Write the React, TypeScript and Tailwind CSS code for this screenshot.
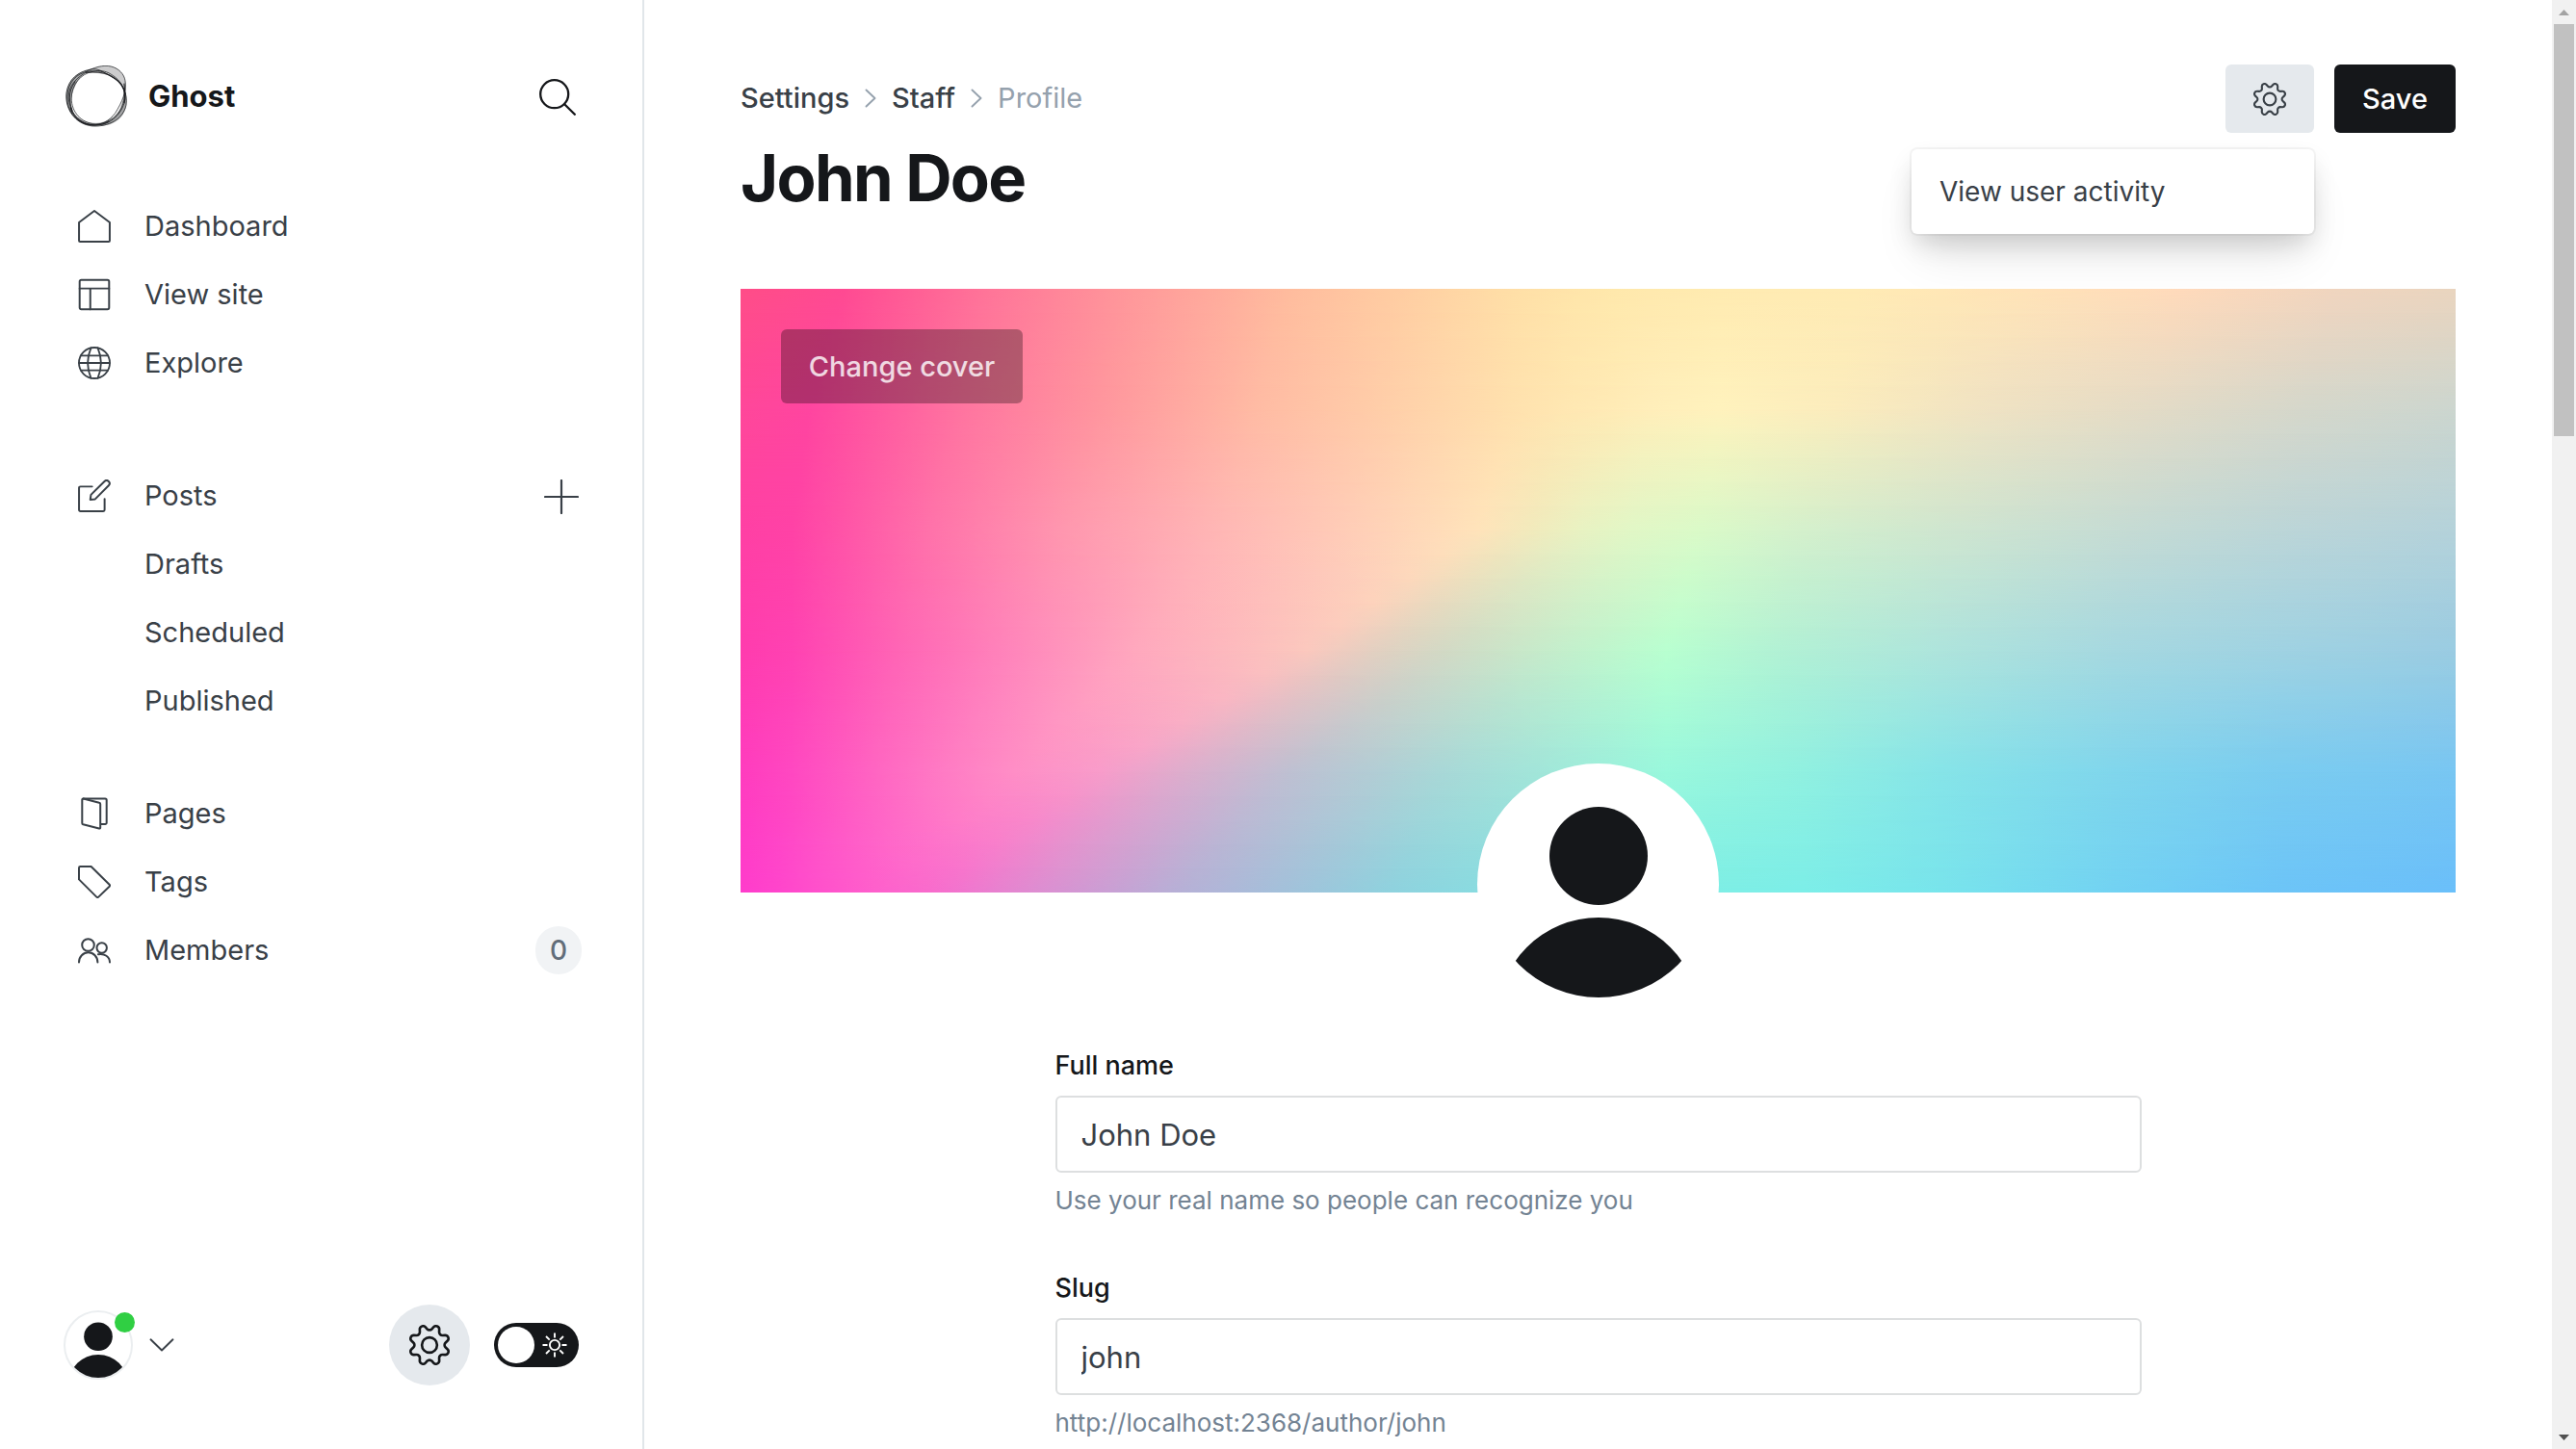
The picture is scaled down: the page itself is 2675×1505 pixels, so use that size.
import React from "react";

type IconProps = { className?: string };

const stroke = {
  fill: "none",
  stroke: "currentColor",
  strokeLinecap: "round" as const,
  strokeLinejoin: "round" as const,
};

function GearIcon({ className }: IconProps) {
  return (
    <svg viewBox="0 0 24 24" className={className} {...stroke} strokeWidth="1.5" aria-hidden="true">
      <path d="M10.546 2.438a1.957 1.957 0 0 0 2.908 0L14.4 1.4a1.959 1.959 0 0 1 3.41 1.413l-.071 1.4A1.958 1.958 0 0 0 19.79 6.27l1.4-.071A1.959 1.959 0 0 1 22.6 9.606l-1.042.94a1.96 1.96 0 0 0 0 2.909l1.042.94a1.959 1.959 0 0 1-1.413 3.41l-1.4-.071a1.958 1.958 0 0 0-2.056 2.056l.071 1.4A1.959 1.959 0 0 1 14.4 22.6l-.941-1.041a1.959 1.959 0 0 0-2.908 0L9.606 22.6A1.959 1.959 0 0 1 6.2 21.192l.072-1.4a1.958 1.958 0 0 0-2.056-2.056l-1.4.071A1.958 1.958 0 0 1 1.4 14.4l1.041-.94a1.96 1.96 0 0 0 0-2.909L1.4 9.606A1.958 1.958 0 0 1 2.813 6.2l1.4.071a1.958 1.958 0 0 0 2.058-2.06L6.2 2.81A1.959 1.959 0 0 1 9.606 1.4z" />
      <circle cx="12" cy="12" r="4.5" />
    </svg>
  );
}

function HomeIcon({ className }: IconProps) {
  return (
    <svg viewBox="0 0 24 24" className={className} {...stroke} strokeWidth="1.4" aria-hidden="true">
      <path d="M12 .75.75 9.2v13.3c0 .4.35.75.75.75h21c.4 0 .75-.35.75-.75V9.2z" />
    </svg>
  );
}

function LayoutIcon({ className }: IconProps) {
  return (
    <svg viewBox="0 0 24 24" className={className} {...stroke} strokeWidth="1.4" aria-hidden="true">
      <rect x="1.2" y="1.2" width="21.6" height="21.6" rx="1.2" />
      <path d="M1.2 7.5h21.6M9 7.5v15.3" />
    </svg>
  );
}

function GlobeIcon({ className }: IconProps) {
  return (
    <svg viewBox="0 0 24 24" className={className} {...stroke} strokeWidth="1.3" aria-hidden="true">
      <circle cx="12" cy="12" r="11.3" />
      <path d="M2.2 6.6h19.6M.8 12h22.4M2.2 17.4h19.6M9.5 1C6.5 8 6.5 16 9.5 23M14.5 1c3 7 3 15 0 22" />
    </svg>
  );
}

function WriteIcon({ className }: IconProps) {
  return (
    <svg viewBox="0 0 24 24" className={className} {...stroke} strokeWidth="1.4" aria-hidden="true">
      <path d="m12.6 14.4-3.6.4.5-3.6 9.9-9.8a2.1 2.1 0 0 1 3.1 3z" />
      <path d="M19.5 14.2v8.1a1 1 0 0 1-1 1H1.75a1 1 0 0 1-1-1V6.200a1 1 0 0 1 1-1h8.6" />
    </svg>
  );
}

function PagesIcon({ className }: IconProps) {
  return (
    <svg viewBox="0 0 34 34" className={className} {...stroke} strokeWidth="2" aria-hidden="true">
      <path d="M5.5 1.5h22.7a1.5 1.5 0 0 1 1.5 1.5v23.5a1.5 1.5 0 0 1-1.5 1.5H24" />
      <path d="M5.5 1.5 22 5.7a1.5 1.5 0 0 1 1.2 1.5v24.300a1 1 0 0 1-1.300 1L5.300 28.300a1.500 1.500 0 0 1-1-1.400V2.500a1 1 0 0 1 1.200-1z" />
    </svg>
  );
}

function TagIcon({ className }: IconProps) {
  return (
    <svg viewBox="0 0 34 34" className={className} {...stroke} strokeWidth="2" aria-hidden="true">
      <path d="M2.4 1h11.2L32.6 19.8a1.4 1.4 0 0 1 0 1.900L21.300 32.600a1.400 1.400 0 0 1-2 0L1 14.400v-12A1.400 1.400 0 0 1 2.400 1z" />
    </svg>
  );
}

function MembersIcon({ className }: IconProps) {
  return (
    <svg viewBox="0 0 34 34" className={className} {...stroke} strokeWidth="2" aria-hidden="true">
      <circle cx="10.500" cy="11.500" r="6.300" />
      <circle cx="24.700" cy="14.500" r="5.200" />
      <path d="M1 29.500a9.700 10.200 0 0 1 19.400 0M21 21.200c6.500-1.200 12 2.600 12 8.300" />
    </svg>
  );
}

function SearchIcon({ className }: IconProps) {
  return (
    <svg viewBox="0 0 38 38" className={className} {...stroke} strokeWidth="2.3" aria-hidden="true">
      <circle cx="15.7" cy="15.7" r="14.5" />
      <path d="M26.2 26.2 36.8 36.8" />
    </svg>
  );
}

function PlusIcon({ className }: IconProps) {
  return (
    <svg viewBox="0 0 36 36" className={className} {...stroke} strokeWidth="2.2" aria-hidden="true">
      <path d="M18 1v34M1 18h34" />
    </svg>
  );
}

function ChevronRight({ className }: IconProps) {
  return (
    <svg viewBox="0 0 12 20" className={className} {...stroke} strokeWidth="1.9" aria-hidden="true">
      <path d="m1.5 1.500 9 8.500-9 8.500" />
    </svg>
  );
}

function ChevronDown({ className }: IconProps) {
  return (
    <svg viewBox="0 0 26 14" className={className} {...stroke} strokeWidth="1.9" aria-hidden="true">
      <path d="m1.5 1.300 11.500 11.200L24.500 1.300" />
    </svg>
  );
}

function SunIcon({ className }: IconProps) {
  return (
    <svg viewBox="0 0 26 26" className={className} {...stroke} strokeWidth="1.9" strokeLinecap="butt" aria-hidden="true">
      <circle cx="13" cy="13" r="5.100" />
      <path d="M13 .5v5M13 20.500v5M.5 13h5M20.500 13h5M4 4l3.700 3.700M18.300 18.300 22 22M22 4l-3.700 3.700M7.700 18.300 4 22" />
    </svg>
  );
}

function GhostLogo({ className }: IconProps) {
  return (
    <svg viewBox="0 0 62 62" className={className} fill="none" stroke="#15171a" aria-hidden="true">
      <g stroke="none" fill="#15171a">
        <path fillOpacity="0.22" d="M19 7C28 2 38-1 46 1c8 2 13 8 14 14 1 4 1 8 0 12C57 18 52 12 44 10 36 8 28 7 19 7z" />
        <path fillOpacity="0.4" d="M25 4C13 6 5 12 2 22c-3 11-1 20 5 28C5 40 5 30 10 20 13 13 18 8 25 4z" />
        <path fillOpacity="0.38" d="M59 22c3 9 4 19-1 27-5 8-14 12-24 12 9-3 17-10 21-18 3-7 4-14 4-21z" />
        <path fillOpacity="0.3" d="M4 42c6 11 15 16 27 16 8 0 14-4 18-8-4 7-12 11-22 11C15 60 7 53 4 42z" />
      </g>
      <g strokeWidth="0.9" strokeOpacity="0.75">
        <path d="M19 7C28 2 38-1 46 1c8 2 13 8 14 14 2 10-3 22-10 33C44 56 36 60 27 60 13 59 4 49 2 37 0 22 8 10 19 7z" />
        <path d="M25 4C13 6 3 14 1 27c-2 16 8 32 26 34 16 1 31-7 34-21 2-12-4-23-15-29C38 7 33 2 25 4z" />
        <path d="M28 6C15 8 6 20 6 33c0 14 10 25 24 26 14 0 25-9 28-21 4-13-2-23-12-29-6-4-12-4-18-3z" />
        <path d="M23 6C12 11 3 20 3 32c1 15 11 27 26 28 14 1 26-9 30-22 3-12-2-21-11-26C40 7 31 3 23 6z" />
      </g>
      <g strokeWidth="1.3" strokeOpacity="0.8">
        <path d="M20 7c11-1 21 0 28 5 7 4 11 10 12 17" />
        <path d="M5 42c3 11 12 18 24 18 6 0 11-1 15-4" />
        <path d="M59 18c1 7 2 14 0 20" />
        <path d="M7 46C3 36 3 25 10 16" strokeWidth="1" />
      </g>
    </svg>
  );
}

function Person({ className }: IconProps) {
  const id = React.useId();
  return (
    <svg viewBox="0 0 234 234" className={className} aria-hidden="true">
      <clipPath id={id}>
        <circle cx="117" cy="117" r="117" />
      </clipPath>
      <g clipPath={`url(#${id})`} fill="#15171a">
        <circle cx="117" cy="87" r="51" />
        <circle cx="117" cy="256.500" r="105.500" />
      </g>
    </svg>
  );
}

type Stop = [number, string];

/* Key rows of the cover artwork; the n-th stop of each row follows the same contour. */
const coverRows: Stop[][] = [
  [[0, "#ff4d88"], [6, "#ff4a92"], [14, "#ff7398"], [22, "#ff959a"], [32, "#ffbc9e"], [45, "#ffdfa7"], [48, "#ffe4a9"], [51, "#ffe8ac"], [53, "#ffe9ae"], [57, "#ffebb1"], [65, "#ffebb4"], [75, "#ffe3b8"], [84, "#ffdabb"], [93, "#f0d5bf"], [100, "#ead5bf"]],
  [[0, "#ff479a"], [4, "#ff45a0"], [13, "#ff75a0"], [21, "#ff969e"], [30, "#ffbba4"], [45, "#ffe1ae"], [48, "#ffe7b2"], [51, "#ffebb6"], [53, "#ffeeba"], [57, "#fff2bd"], [64, "#fbecbd"], [73, "#efe2c3"], [82, "#e3dbc6"], [91, "#d5d7cb"], [100, "#ccd6cf"]],
  [[0, "#ff40a4"], [3, "#ff42a6"], [11, "#ff72aa"], [19, "#ff98af"], [28, "#ffb7b5"], [43, "#ffe3ba"], [46, "#f2eabc"], [49, "#e8f2c2"], [52, "#e1f7c6"], [56, "#dafac8"], [62, "#d4f0cc"], [71, "#cee5d0"], [81, "#c5dbd4"], [91, "#bbd5d8"], [100, "#b4d2da"]],
  [[0, "#ff3cae"], [3, "#ff42b2"], [9, "#ff64b5"], [16, "#ff86bb"], [23, "#ffa8be"], [33, "#fbc8be"], [37, "#e2d0c1"], [41, "#d2d9c5"], [47, "#c5eccb"], [54, "#b8ffd0"], [60, "#b2f2d4"], [70, "#aee4dc"], [80, "#a6d8e0"], [90, "#9fd2e2"], [100, "#9acce2"]],
  [[0, "#ff3cbe"], [3, "#ff48c1"], [8, "#ff66c2"], [12, "#ff7cc4"], [16, "#ff8ec6"], [21, "#f89cca"], [26, "#dcaecd"], [32, "#bec0d2"], [41, "#a8d8d7"], [54, "#99f8dc"], [62, "#90f0e0"], [70, "#86e4e8"], [80, "#80d6ec"], [90, "#7accf0"], [100, "#78c6f2"]],
  [[0, "#ff3ccc"], [2, "#ff44cc"], [4, "#ff4ecc"], [6, "#ff57cc"], [8, "#fe60cc"], [11, "#f86bcc"], [17, "#de8cd1"], [25, "#b8aed6"], [38, "#8ed2de"], [54, "#7eeee4"], [62, "#7ceee8"], [70, "#78e4ec"], [80, "#72d2f2"], [90, "#6cc4f7"], [100, "#6abffa"]],
];

function mixColor(a: string, b: string, t: number) {
  const channel = (hex: string, i: number) => parseInt(hex.slice(1 + i * 2, 3 + i * 2), 16);
  const parts = [0, 1, 2].map((i) => Math.round(channel(a, i) * (1 - t) + channel(b, i) * t));
  return `rgb(${parts.join(",")})`;
}

const STEPS = 5;
const bands = (coverRows.length - 1) * STEPS;
const meshRows: Stop[][] = Array.from({ length: bands + 1 }, (_, n) => {
  const k = Math.min(Math.floor(n / STEPS), coverRows.length - 2);
  const t = n / STEPS - k;
  return coverRows[k].map(([at, color], i): Stop => {
    const [nextAt, nextColor] = coverRows[k + 1][i];
    return [at * (1 - t) + nextAt * t, mixColor(color, nextColor, t)];
  });
});

/* Colour mesh: each row is a horizontal gradient, faded into the next one. */
function CoverArt({ className }: IconProps) {
  return (
    <svg viewBox={`0 0 100 ${bands}`} preserveAspectRatio="none" className={className} aria-hidden="true">
      <defs>
        {meshRows.map((row, i) => (
          <linearGradient key={i} id={`cover-row-${i}`} gradientUnits="userSpaceOnUse" x1="0" x2="100" y1="0" y2="0">
            {row.map(([at, color], n) => (
              <stop key={n} offset={`${at}%`} stopColor={color} />
            ))}
          </linearGradient>
        ))}
        {meshRows.slice(1).map((_, i) => (
          <React.Fragment key={i}>
            <linearGradient id={`cover-fade-${i}`} gradientUnits="userSpaceOnUse" x1="0" x2="0" y1={i} y2={i + 1}>
              <stop offset="0" stopColor="#fff" stopOpacity="0" />
              <stop offset="1" stopColor="#fff" />
            </linearGradient>
            <mask id={`cover-mask-${i}`} maskUnits="userSpaceOnUse" x="0" y="0" width="100" height={bands}>
              <rect width="100" height={bands} fill={`url(#cover-fade-${i})`} />
            </mask>
          </React.Fragment>
        ))}
      </defs>
      <rect width="100" height={bands} fill="url(#cover-row-0)" />
      {meshRows.slice(1).map((_, i) => (
        <rect key={i} width="100" height={bands} fill={`url(#cover-row-${i + 1})`} mask={`url(#cover-mask-${i})`} />
      ))}
    </svg>
  );
}

function NavItem({ label, icon, children }: { label: string; icon?: React.ReactNode; children?: React.ReactNode }) {
  return (
    <li className="flex h-[71px] items-center justify-between">
      <a href="#" className="flex items-center">
        <span className="flex w-[69px] shrink-0 pt-px">{icon}</span>
        {label}
      </a>
      {children}
    </li>
  );
}

function Sidebar() {
  const icon = "size-[34px]";
  return (
    <aside className="flex w-[669px] shrink-0 flex-col justify-between border-r-2 border-[#e1e6ea] px-[66px] pt-[67px] pb-[66px]">
      <div>
        <div className="flex items-center justify-between pl-0.5">
          <div className="flex items-center gap-[22px] text-[31px] leading-[66px] font-bold text-[#15171a]">
            <GhostLogo className="size-[64px]" />
            Ghost
          </div>
          <button type="button" aria-label="Search" className="mr-[3px] pt-px text-[#15171a]">
            <SearchIcon className="size-[38px]" />
          </button>
        </div>
        <nav className="mt-[66px] pl-[15px] text-[29px] text-[#394047]">
          <ul>
            <NavItem label="Dashboard" icon={<HomeIcon className={icon} />} />
            <NavItem label="View site" icon={<LayoutIcon className={icon} />} />
            <NavItem label="Explore" icon={<GlobeIcon className={icon} />} />
          </ul>
          <ul className="mt-[67px]">
            <NavItem label="Posts" icon={<WriteIcon className={icon} />}>
              <button type="button" aria-label="New post" className="pt-0.5">
                <PlusIcon className="size-9" />
              </button>
            </NavItem>
            <NavItem label="Drafts" />
            <NavItem label="Scheduled" />
            <NavItem label="Published" />
          </ul>
          <ul className="mt-[46px]">
            <NavItem label="Pages" icon={<PagesIcon className={icon} />} />
            <NavItem label="Tags" icon={<TagIcon className={icon} />} />
            <NavItem label="Members" icon={<MembersIcon className={icon} />}>
              <span className="-mr-[3px] flex h-[50px] w-[48px] items-center justify-center rounded-full bg-[#f1f3f5] text-[28px] font-medium text-[#626d79]">
                0
              </span>
            </NavItem>
          </ul>
        </nav>
      </div>
      <div className="flex items-center justify-between">
        <button type="button" aria-label="Account" className="flex items-center gap-[17px] text-[#394047]">
          <span className="relative block size-[72px] rounded-full border-2 border-[#ebeef0]">
            <Person className="size-full" />
            <span className="absolute top-0 -right-1 size-[21px] rounded-full bg-[#30cf43]" />
          </span>
          <ChevronDown className="h-[14px] w-[26px]" />
        </button>
        <div className="flex items-center gap-[25px]">
          <button
            type="button"
            aria-label="Settings"
            className="flex size-[84px] items-center justify-center rounded-full bg-[#e5e9ed] text-[#15171a]"
          >
            <GearIcon className="size-[42px]" />
          </button>
          <label className="relative flex h-[46px] w-[88px] items-center justify-between rounded-full bg-[#15171a] pr-3 pl-1 text-white">
            <input type="checkbox" role="switch" aria-label="Dark mode" className="absolute inset-0 size-full opacity-0" />
            <span className="size-[38px] rounded-full bg-white" />
            <SunIcon className="size-[26px]" />
          </label>
        </div>
      </div>
    </aside>
  );
}

function Field({ id, label, value, hint }: { id: string; label: string; value: string; hint: string }) {
  return (
    <div className="flex flex-col">
      <label htmlFor={id} className="text-[27px] leading-[40px] font-medium text-[#15171a]">
        {label}
      </label>
      <input
        id={id}
        type="text"
        defaultValue={value}
        aria-describedby={`${id}-hint`}
        className="mt-[11px] h-[80px] w-full rounded-md border-2 border-[#dddfe0] bg-white px-[25px] text-[31px] text-[#394047]"
      />
      <p id={`${id}-hint`} className="mt-[9px] text-[26px] leading-[40px] text-[#738393]">
        {hint}
      </p>
    </div>
  );
}

function ScrollRail() {
  return (
    <div aria-hidden="true" className="flex w-[25px] shrink-0 flex-col items-center bg-[#f1f1f1]">
      <svg viewBox="0 0 25 25" className="size-[25px]">
        <path d="M7 16l5.500-6 5.500 6z" fill="#a3a3a3" />
      </svg>
      <div className="h-[428px] w-[21px] bg-[#c1c1c1]" />
      <svg viewBox="0 0 25 25" className="mt-auto size-[25px]">
        <path d="M7 10l5.500 6 5.500-6z" fill="#505050" />
      </svg>
    </div>
  );
}

export default function App() {
  return (
    <div className="flex h-screen overflow-hidden bg-white font-['Inter',sans-serif]">
      <Sidebar />
      <main className="min-w-0 flex-1 overflow-hidden px-[100px] pt-[67px]">
        <header className="flex items-start justify-between">
          <div>
            <nav aria-label="Breadcrumb" className="flex h-[70px] items-center gap-4 text-[29px] font-medium text-[#394047]">
              <a href="#">Settings</a>
              <ChevronRight className="h-5 w-3 text-[#95a1ad]" />
              <a href="#">Staff</a>
              <ChevronRight className="h-5 w-3 text-[#95a1ad]" />
              <span className="font-normal text-[#95a1ad]">Profile</span>
            </nav>
            <h1 className="mt-2 text-[67px] leading-[80px] font-bold tracking-tight text-[#15171a]">John Doe</h1>
          </div>
          <div className="relative flex gap-[21px]">
            <button
              type="button"
              aria-label="Actions"
              className="flex h-[71px] w-[92px] items-center justify-center rounded-md bg-[#e5e9ed] text-[#394047]"
            >
              <GearIcon className="size-[34px]" />
            </button>
            <button type="button" className="h-[71px] w-[126px] rounded-md bg-[#15171a] text-[29px] font-medium text-white">
              Save
            </button>
            <div className="absolute top-[88px] right-[147px] w-[418px] rounded-md bg-white py-4 shadow-[0_0_0_2px_rgba(0,0,0,0.04),0_12px_28px_-4px_rgba(0,0,0,0.16),0_30px_50px_-10px_rgba(0,0,0,0.1)]">
              <button type="button" className="block w-full px-[29px] text-left text-[28px] leading-[56px] text-[#394047]">
                View user activity
              </button>
            </div>
          </div>
        </header>
        <section className="relative mt-[75px] h-[627px]">
          <CoverArt className="block size-full" />
          <button
            type="button"
            className="absolute top-[42px] left-[42px] h-[77px] w-[251px] rounded-md bg-black/30 text-[29px] font-medium text-white/80"
          >
            Change cover
          </button>
        </section>
        <div className="relative mx-auto -mt-[134px] flex size-[251px] items-center justify-center rounded-full bg-white">
          <Person className="size-[234px]" />
        </div>
        <form className="mx-auto mt-[43px] flex max-w-[1128px] flex-col gap-[51px]">
          <Field id="full-name" label="Full name" value="John Doe" hint="Use your real name so people can recognize you" />
          <Field id="slug" label="Slug" value="john" hint="http://localhost:2368/author/john" />
        </form>
      </main>
      <ScrollRail />
    </div>
  );
}
